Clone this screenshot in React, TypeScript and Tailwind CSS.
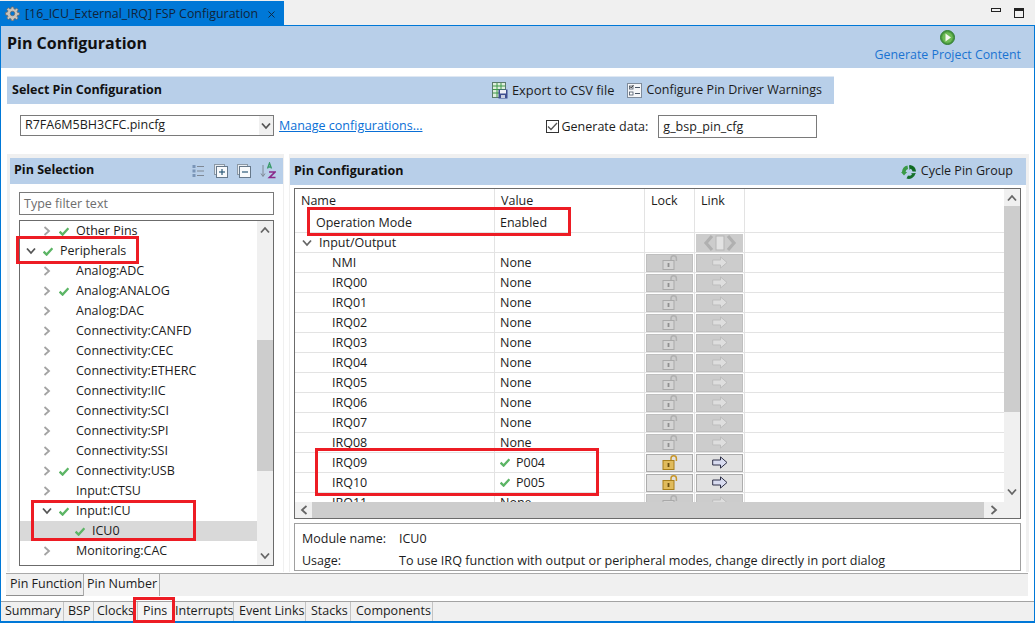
import React from "react";
import { X } from "lucide-react";

const Check = ({ className = "" }: { className?: string }) => (
  <svg width="10" height="9" viewBox="0 0 10 9" className={className}>
    <path d="M0.6 4.6 L3.6 7.6 L9.4 1.2" fill="none" stroke="#5cb565" strokeWidth="2.3" />
  </svg>
);

const ChevR = ({ c = "#a3a3a3" }: { c?: string }) => (
  <svg width="8" height="10" viewBox="0 0 8 10"><path d="M1.5 1 L6 5 L1.5 9" fill="none" stroke={c} strokeWidth="1.8" /></svg>
);
const ChevD = ({ c = "#555" }: { c?: string }) => (
  <svg width="10" height="8" viewBox="0 0 10 8"><path d="M1 1.5 L5 6 L9 1.5" fill="none" stroke={c} strokeWidth="1.8" /></svg>
);
const ChevU = ({ c = "#666" }: { c?: string }) => (
  <svg width="10" height="8" viewBox="0 0 10 8"><path d="M1 6.5 L5 2 L9 6.5" fill="none" stroke={c} strokeWidth="1.8" /></svg>
);
const ChevL = ({ c = "#666" }: { c?: string }) => (
  <svg width="8" height="10" viewBox="0 0 8 10"><path d="M6.5 1 L2 5 L6.5 9" fill="none" stroke={c} strokeWidth="1.8" /></svg>
);

const Gear = () => (
  <svg width="15" height="15" viewBox="0 0 16 16">
    <g fill="#c9c4bd" stroke="#6f6a66" strokeWidth="0.8">
      <path d="M6.8 1h2.4l.3 2 1.3.5 1.6-1.2 1.7 1.7-1.2 1.6.5 1.3 2 .3v2.4l-2 .3-.5 1.3 1.2 1.6-1.7 1.7-1.6-1.2-1.3.5-.3 2H6.8l-.3-2-1.3-.5-1.6 1.2-1.7-1.7 1.2-1.6-.5-1.3-2-.3V6.8l2-.3.5-1.3-1.2-1.6 1.7-1.7 1.6 1.2 1.3-.5z" />
    </g>
    <circle cx="8" cy="8" r="2.4" fill="#0078d7" stroke="#6f6a66" strokeWidth="0.8" />
  </svg>
);

const GenIcon = () => (
  <svg width="15" height="15" viewBox="0 0 15 15">
    <circle cx="7.5" cy="7.5" r="7" fill="#4c9a3f" stroke="#2f7d32" />
    <circle cx="7.5" cy="7.5" r="5.2" fill="#6dbb55" />
    <path d="M5.5 3.5 L11 7.5 L5.5 11.5 Z" fill="#f4f7ee" />
  </svg>
);

const CsvIcon = () => (
  <svg width="16" height="17" viewBox="0 0 16 17">
    <rect x="0.5" y="0.5" width="13" height="15" fill="#dfeedd" stroke="#5a7a6a" />
    <path d="M1 4h12M1 7.5h12M1 11h12M5 1v14M9 1v14" stroke="#3f9a4a" strokeWidth="1" />
    <rect x="6.5" y="7.5" width="9" height="9" fill="#3f4f8f" />
    <rect x="8" y="8" width="6" height="3.5" fill="#eef0f6" />
    <rect x="9" y="13" width="4" height="3" fill="#c9cfe0" />
  </svg>
);

const WarnIcon = () => (
  <svg width="15" height="15" viewBox="0 0 15 15">
    <rect x="0.5" y="0.5" width="14" height="14" fill="#f5f6f8" stroke="#7f8c9c" />
    <rect x="2.5" y="3" width="3.5" height="3" fill="#fff" stroke="#4a5666" strokeWidth="0.8" />
    <path d="M3 3.5 L4.2 5 L6.5 2" fill="none" stroke="#333" strokeWidth="0.9" />
    <rect x="2.5" y="9" width="3.5" height="3" fill="#fff" stroke="#4a5666" strokeWidth="0.8" />
    <path d="M8 4.5h5M8 10.5h5" stroke="#4a5666" />
  </svg>
);

const CycleIcon = () => (
  <svg width="16" height="16" viewBox="0 0 16 16" fill="none">
    <path d="M1 8 A7 7 0 0 1 6.5 1.4 L7 5 A3.5 3.5 0 0 0 4.6 8 L6.2 8 L3 11.5 L0 8 Z" fill="#3a9a46" />
    <path d="M9 1 A7 7 0 0 1 15 7.5 L11.5 7.5 A3.5 3.5 0 0 0 9.5 4.8 L8.6 6 L8 1.5 Z" fill="#0f6a22" />
    <path d="M14.5 9.5 A7 7 0 0 1 5.5 14.5 L7 11.6 A3.5 3.5 0 0 0 11 10.2 L10 9.2 L15 9 Z" fill="#15702a" />
  </svg>
);

const ListIcon = () => (
  <svg width="13" height="13" viewBox="0 0 13 13">
    <g fill="#7a95b8"><rect x="0.5" y="1" width="3" height="3" /><rect x="0.5" y="5.5" width="3" height="3" /><rect x="0.5" y="10" width="3" height="3" /></g>
    <path d="M5 2.5h7M5 7h7M5 11.5h7" stroke="#7f8894" strokeWidth="1" />
  </svg>
);
const BoxIcon = ({ plus }: { plus?: boolean }) => (
  <svg width="14" height="14" viewBox="0 0 14 14">
    <rect x="0.5" y="0.5" width="10" height="10" fill="#e8edf2" stroke="#8b98a5" />
    <rect x="2.5" y="2.5" width="11" height="11" fill="#f7f9fb" stroke="#66788a" />
    <path d="M5 8h6" stroke="#2c5a7a" strokeWidth="1.2" />
    {plus && <path d="M8 5v6" stroke="#2c5a7a" strokeWidth="1.2" />}
  </svg>
);
const SortIcon = () => (
  <svg width="16" height="17" viewBox="0 0 16 17">
    <path d="M3 3v11M1 11.5 L3 14.5 L5 11.5" fill="none" stroke="#7f8894" strokeWidth="1" />
    <path d="M7.5 6.5 L9.5 1 L11.5 6.5 M8.2 5 h2.6" fill="none" stroke="#3a9a6a" strokeWidth="1.3" />
    <path d="M9 10h6 L9.5 15.5 h6" fill="none" stroke="#8a2a8a" strokeWidth="1.7" />
  </svg>
);

const Lock = ({ on }: { on: boolean }) => (
  <svg width="16" height="15" viewBox="0 0 16 15">
    <path d="M9 6.5 V3.5 a2.7 2.7 0 0 1 5.4 0 V6" fill="none" stroke={on ? "#c7962a" : "#b0b0b0"} strokeWidth="1.5" />
    <rect x="1" y="5.5" width="11" height="9" fill={on ? "#e0bb5c" : "#d4d4d4"} stroke={on ? "#a87f1c" : "#a9a9a9"} />
    <rect x="5.6" y="8" width="1.8" height="4" fill={on ? "#6b4f10" : "#8f8f8f"} />
  </svg>
);
const Arrow = ({ on }: { on: boolean }) => (
  <svg width="16" height="13" viewBox="0 0 16 13">
    <path d="M0.7 4 H8.5 V0.9 L15 6.5 L8.5 12.1 V9 H0.7 Z" fill={on ? "#d9dcf0" : "#dedede"} stroke={on ? "#2f3148" : "#bdbdbd"} strokeWidth="1" />
  </svg>
);
const LinkAll = () => (
  <svg width="34" height="18" viewBox="0 0 34 18">
    <path d="M9 2 L3 9 L9 16" fill="none" stroke="#b0b0b0" strokeWidth="3.2" />
    <rect x="13" y="2" width="8" height="14" fill="#e2e2e2" stroke="#b5b5b5" />
    <path d="M25 2 L31 9 L25 16" fill="none" stroke="#b0b0b0" strokeWidth="3.2" />
  </svg>
);

const treeRows: { t: string; ind: 0 | 1 | 2; ok?: boolean; open?: boolean; sel?: boolean }[] = [
  { t: "Other Pins", ind: 1, ok: true },
  { t: "Peripherals", ind: 0, ok: true, open: true },
  { t: "Analog:ADC", ind: 1 },
  { t: "Analog:ANALOG", ind: 1, ok: true },
  { t: "Analog:DAC", ind: 1 },
  { t: "Connectivity:CANFD", ind: 1 },
  { t: "Connectivity:CEC", ind: 1 },
  { t: "Connectivity:ETHERC", ind: 1 },
  { t: "Connectivity:IIC", ind: 1 },
  { t: "Connectivity:SCI", ind: 1 },
  { t: "Connectivity:SPI", ind: 1 },
  { t: "Connectivity:SSI", ind: 1 },
  { t: "Connectivity:USB", ind: 1, ok: true },
  { t: "Input:CTSU", ind: 1 },
  { t: "Input:ICU", ind: 1, ok: true, open: true },
  { t: "ICU0", ind: 2, ok: true, sel: true },
  { t: "Monitoring:CAC", ind: 1 },
];

const pinRows = ["NMI", "IRQ00", "IRQ01", "IRQ02", "IRQ03", "IRQ04", "IRQ05", "IRQ06", "IRQ07", "IRQ08", "IRQ09", "IRQ10", "IRQ11"];
const active: Record<string, string> = { IRQ09: "P004", IRQ10: "P005" };

const bottomTabs: { t: string; cls: string; sel?: boolean }[] = [
  { t: "Summary", cls: "w-[62px] pl-[3px]" },
  { t: "BSP", cls: "w-[30px] pl-[4px]" },
  { t: "Clocks", cls: "w-[44px] pl-[3px]" },
  { t: "Pins", cls: "w-[34px] pl-[5px]", sel: true },
  { t: "Interrupts", cls: "w-[62px] pl-[3px]" },
  { t: "Event Links", cls: "w-[72px] pl-[5px]" },
  { t: "Stacks", cls: "w-[45px] pl-[5px]" },
  { t: "Components", cls: "w-[82px] pl-[5px]" },
];

function Row({ name, nameCls, value, lock, link }: { name: React.ReactNode; nameCls: string; value?: React.ReactNode; lock?: React.ReactNode; link?: React.ReactNode }) {
  return (
    <div className="flex h-[20px] shrink-0 border-b border-[#e3e3e3] leading-[19px]">
      <div className={`w-[200px] shrink-0 border-r border-[#e3e3e3] flex items-center ${nameCls}`}>{name}</div>
      <div className="w-[150px] shrink-0 border-r border-[#e3e3e3] pl-[5px] flex items-center">{value}</div>
      <div className="w-[50px] shrink-0 border-r border-[#e3e3e3] flex items-center justify-center">{lock}</div>
      <div className="w-[50px] shrink-0 border-r border-[#e3e3e3] flex items-center justify-center">{link}</div>
    </div>
  );
}

const PinBtn = ({ on, children }: { on: boolean; children: React.ReactNode }) => (
  <div className={`w-[47px] h-[18px] flex items-center justify-center border ${on ? "bg-[#e1e1e1] border-[#adadad]" : "bg-[#cccccc] border-[#bfbfbf]"}`}>{children}</div>
);

export default function App() {
  return (
    <div className="relative w-[1035px] h-[623px] flex flex-col overflow-hidden bg-white text-[12.5px] text-[#1c1c1c] font-['Open_Sans','Noto_Sans',sans-serif]">
      {/* editor tab */}
      <div className="h-[25px] shrink-0 bg-[#f0f0f0] flex items-end justify-between">
        <div className="w-[284px] h-[24px] bg-[#0078d7] flex items-center pl-[5px] gap-[5px]">
          <Gear />
          <span className="whitespace-nowrap text-[12.4px] pt-[3px] text-[#10243a]">[16_ICU_External_IRQ] FSP Configuration</span>
          <X size={11} className="ml-[3px] mt-[2px] text-[#10243a]" />
        </div>
        <div className="flex items-start gap-[13px] self-start pt-[8px] pr-[11px]">
          <div className="w-[10px] h-[4px] border border-[#222]" />
          <div className="w-[10px] h-[10px] border border-[#222] border-t-[3px]" />
        </div>
      </div>

      <div className="flex-1 min-h-0 flex flex-col border-x border-t border-b-2 border-[#0078d7]">
        {/* page header */}
        <div className="h-[42px] shrink-0 bg-[#b8cfe9] flex justify-between pl-[6px] pr-[13px]">
          <div className="text-[16px] font-bold leading-[20px] pt-[7px] text-[#111]">Pin Configuration</div>
          <div className="flex flex-col items-center pt-[4px]">
            <GenIcon />
            <div className="text-[#1a73d2] text-[12.35px] leading-[16px] mt-[2px]">Generate Project Content</div>
          </div>
        </div>

        {/* select configuration */}
        <div className="h-[8px] shrink-0" />
        <div className="ml-[6px] w-[827px] h-[28px] shrink-0 bg-[#b8cfe9] border-t border-[#dfe8f3] flex items-center justify-between pl-[5px] pr-[12px]">
          <span className="font-bold text-[#111]">Select Pin Configuration</span>
          <div className="flex items-center">
            <CsvIcon />
            <span className="ml-[4px] text-[12.85px]">Export to CSV file</span>
            <span className="ml-[13px]"><WarnIcon /></span>
            <span className="ml-[4px]">Configure Pin Driver Warnings</span>
          </div>
        </div>
        <div className="h-[50px] shrink-0 flex items-start pt-[11px] pl-[19px]">
          <div className="w-[254px] h-[21px] border border-[#7a7a7a] flex items-center justify-between pl-[4px]">
            <span>R7FA6M5BH3CFC.pincfg</span>
            <div className="w-[14px] h-full bg-[#f0f0f0] flex items-center justify-center"><ChevD c="#555" /></div>
          </div>
          <a className="ml-[5px] text-[#0a6fd6] underline leading-[21px]">Manage configurations...</a>
          <div className="ml-[123px] mt-[5px] w-[13px] h-[13px] border border-[#333] bg-white flex items-center justify-center">
            <svg width="11" height="9" viewBox="0 0 11 9"><path d="M1 4.5 L4 7.5 L10 1" fill="none" stroke="#555" strokeWidth="1.3" /></svg>
          </div>
          <span className="ml-[3px] leading-[24px]">Generate data:</span>
          <div className="ml-[10px] w-[159px] h-[23px] border border-[#7a7a7a] pl-[4px] leading-[22px]">g_bsp_pin_cfg</div>
        </div>

        {/* panels */}
        <div className="h-[418px] shrink-0 flex pl-[6px]">
          <div className="w-[277px] h-full border-t-[4px] border-l-[3px] border-r border-[#f0f0f0] flex flex-col">
            <div className="h-[26px] shrink-0 bg-[#b8cfe9] flex items-center justify-between pl-[4px] pr-[7px] pb-[1px]">
              <span className="font-bold text-[#111] pb-[1px]">Pin Selection</span>
              <div className="flex items-center gap-[9px]">
                <ListIcon /><BoxIcon plus /><BoxIcon /><SortIcon />
              </div>
            </div>
            <div className="ml-[9px] mt-[8px] w-[255px] h-[23px] shrink-0 border border-[#7a7a7a] pl-[4px] leading-[22px] text-[#6d6d6d]">Type filter text</div>
            <div className="ml-[9px] mt-[5px] w-[255px] h-[346px] shrink-0 border border-[#6b6b6b] flex">
              <div className="flex-1 min-w-0">
                {treeRows.map((r) => (
                  <div key={r.t} className={`h-[20px] flex items-center ${r.sel ? "bg-[#d9d9d9]" : ""}`}>
                    {r.ind === 0 && <span className="w-[10px] ml-[6px] flex justify-center"><ChevD /></span>}
                    {r.ind === 1 && <span className="w-[10px] ml-[22px] flex justify-center">{r.open ? <ChevD /> : <ChevR />}</span>}
                    {r.ind === 2 && <span className="w-[10px] ml-[38px]" />}
                    <span className="w-[10px] ml-[7px] flex justify-center">{r.ok && <Check />}</span>
                    <span className="ml-[7px] whitespace-nowrap">{r.t}</span>
                  </div>
                ))}
              </div>
              <div className="w-[16px] shrink-0 bg-[#f0f0f0] flex flex-col">
                <div className="h-[18px] flex items-center justify-center"><ChevU /></div>
                <div className="h-[101px]" />
                <div className="h-[131px] bg-[#cdcdcd]" />
                <div className="flex-1 flex items-end justify-center pb-[5px]"><ChevD c="#666" /></div>
              </div>
            </div>
          </div>

          <div className="ml-[5px] w-[740px] h-full border-t-[4px] border-l border-r-[3px] border-[#f0f0f0] flex flex-col">
            <div className="h-[27px] shrink-0 bg-[#b8cfe9] flex items-center justify-between pl-[4px] pr-[13px]">
              <span className="font-bold text-[#111]">Pin Configuration</span>
              <div className="flex items-center gap-[4px]"><CycleIcon /><span>Cycle Pin Group</span></div>
            </div>
            <div className="ml-[4px] mt-[3px] w-[727px] h-[331px] shrink-0 border border-[#6b6b6b] flex">
              <div className="w-[709px] shrink-0 flex flex-col">
                <div className="h-[313px] overflow-hidden">
                  <div className="flex h-[24px] leading-[23px]">
                    <div className="w-[200px] border-r border-[#e3e3e3] pl-[6px]">Name</div>
                    <div className="w-[150px] border-r border-[#e3e3e3] pl-[6px]">Value</div>
                    <div className="w-[50px] border-r border-[#e3e3e3] pl-[6px]">Lock</div>
                    <div className="w-[50px] border-r border-[#e3e3e3] pl-[6px]">Link</div>
                  </div>
                  <Row name="Operation Mode" nameCls="pl-[21px]" value="Enabled" />
                  <Row
                    name={<><span className="mr-[7px]"><ChevD c="#666" /></span>Input/Output</>}
                    nameCls="pl-[7px]"
                    link={<div className="w-[47px] h-[18px] flex items-center justify-center bg-[#cccccc]"><LinkAll /></div>}
                  />
                  {pinRows.map((p) => {
                    const v = active[p];
                    return (
                      <Row
                        key={p}
                        name={p}
                        nameCls="pl-[37px]"
                        value={v ? <><Check /><span className="ml-[6px]">{v}</span></> : "None"}
                        lock={<PinBtn on={!!v}><Lock on={!!v} /></PinBtn>}
                        link={<PinBtn on={!!v}><Arrow on={!!v} /></PinBtn>}
                      />
                    );
                  })}
                </div>
                <div className="h-[16px] flex bg-[#f0f0f0]">
                  <div className="w-[17px] flex items-center justify-center"><ChevL /></div>
                  <div className="w-[672px] bg-[#cdcdcd]" />
                  <div className="flex-1 flex items-center justify-center"><ChevR c="#666" /></div>
                </div>
              </div>
              <div className="flex-1 bg-[#f0f0f0] flex flex-col">
                <div className="h-[17px] flex items-center justify-center"><ChevU /></div>
                <div className="h-[206px] bg-[#cdcdcd]" />
                <div className="h-[90px] flex items-end justify-center pb-[6px]"><ChevD c="#666" /></div>
              </div>
            </div>
            <div className="ml-[4px] mt-[4px] w-[727px] h-[48px] shrink-0 border border-[#a0a0a0] flex flex-col pl-[7px] pt-[6px]">
              <div className="flex leading-[18px]"><span className="w-[97px]">Module name:</span><span>ICU0</span></div>
              <div className="flex leading-[18px] mt-[4px]"><span className="w-[97px]">Usage:</span><span className="text-[12.6px]">To use IRQ function with output or peripheral modes, change directly in port dialog</span></div>
            </div>
          </div>
        </div>

        {/* pin function/number tabs */}
        <div className="ml-[5px] w-[1022px] h-[23px] mt-[1px] shrink-0 bg-[#f0f0f0] border-t border-[#a9a9a9] flex">
          <div className="w-[77px] h-[22px] border-b border-[#8f8f8f] pl-[4px] leading-[20px]">Pin Function</div>
          <div className="w-[77px] h-full bg-[#f5f5f5] border-x border-[#a9a9a9] pl-[3px] leading-[20px]">Pin Number</div>
        </div>

        {/* bottom tabs */}
        <div className="flex-1 min-h-0 mt-[5px] bg-[#f0f0f0] border-t border-[#a3a3a3] flex pl-[1px]">
          {bottomTabs.map((b) => (
            <div key={b.t} className={`${b.cls} shrink-0 h-full flex items-center whitespace-nowrap ${b.sel ? "bg-[#f5f5f5]" : "border-r border-[#c4c4c4]"}`}>{b.t}</div>
          ))}
        </div>
      </div>

      {/* red annotation rectangles */}
      <div className="absolute left-[16px] top-[236px] w-[123px] h-[28px] border-[3px] border-[#ed1c24]" />
      <div className="absolute left-[31px] top-[500px] w-[165px] h-[41px] border-[3px] border-[#ed1c24]" />
      <div className="absolute left-[133px] top-[597px] w-[42px] h-[26px] border-[3px] border-[#ed1c24]" />
      <div className="absolute left-[307px] top-[207px] w-[264px] h-[29px] border-[3px] border-[#ed1c24]" />
      <div className="absolute left-[315px] top-[448px] w-[284px] h-[48px] border-[3px] border-[#ed1c24]" />
    </div>
  );
}
